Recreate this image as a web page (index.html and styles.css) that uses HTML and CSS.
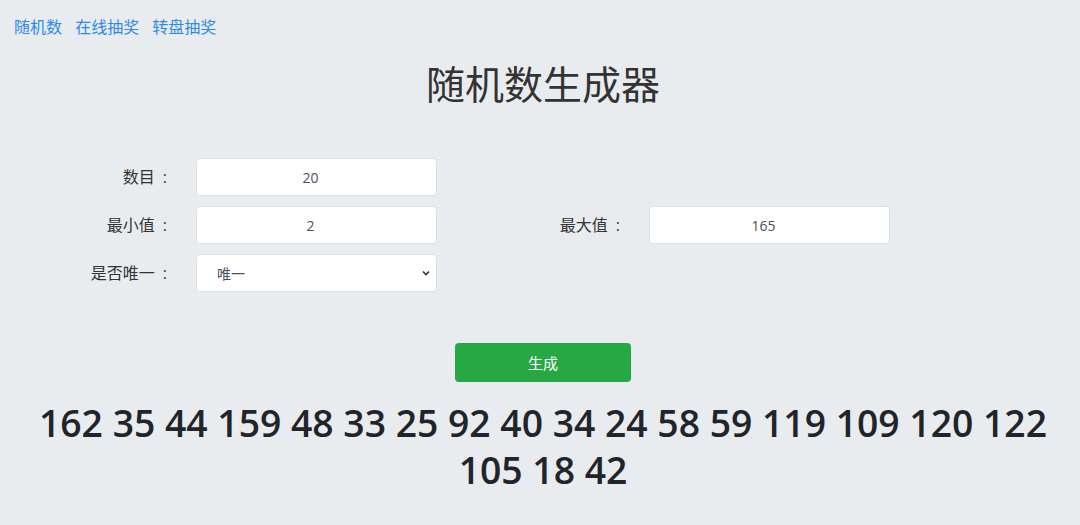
FILE: index.html
```
<!DOCTYPE html>
<html lang="zh-CN">
<head>
  <meta charset="UTF-8">
  <meta name="viewport" content="width=device-width, initial-scale=1.0">
  <title>随机数生成器</title>
  <link rel="stylesheet" href="styles.css">
</head>
<body>
  <nav class="nav">
    <a href="#">随机数</a>
    <a href="#">在线抽奖</a>
    <a href="#">转盘抽奖</a>
  </nav>

  <h1 class="title">随机数生成器</h1>

  <form class="form">
    <label class="label" for="count">数目<span class="colon">:</span></label>
    <input id="count" class="field" type="text" value="20">
    <span></span><span></span>

    <label class="label" for="min">最小值<span class="colon">:</span></label>
    <input id="min" class="field" type="text" value="2">
    <label class="label" for="max">最大值<span class="colon">:</span></label>
    <input id="max" class="field" type="text" value="165">

    <label class="label" for="unique">是否唯一<span class="colon">:</span></label>
    <div class="select-wrap">
      <select id="unique" class="field select">
        <option>唯一</option>
        <option>不唯一</option>
      </select>
      <svg class="chevron" width="10" height="10" viewBox="0 0 10 10">
        <path d="M2 3.5 L5 6.5 L8 3.5" fill="none" stroke="#333" stroke-width="1.6"/>
      </svg>
    </div>
  </form>

  <div class="actions">
    <button class="btn" type="button">生成</button>
  </div>

  <div class="result">162 35 44 159 48 33 25 92 40 34 24 58 59 119 109 120 122 105 18 42</div>
</body>
</html>
```

FILE: styles.css
```
body {
  margin: 0;
  padding: 0 5px 0 11px;
  background-color: #e9ecef;
  font-family: "Open Sans", "Noto Sans CJK SC", sans-serif;
  color: #333;
}
.nav {
  padding-top: 16px;
  padding-left: 3px;
  font-size: 16px;
  line-height: 22px;
}
.nav a {
  color: #2e8ae6;
  text-decoration: none;
  margin-right: 9px;
}
.title {
  margin: 21px 0 0;
  text-align: center;
  font-size: 39px;
  font-weight: 400;
  line-height: 50px;
  color: #333;
}
.form {
  display: grid;
  grid-template-columns: 165px 241px 172px 241px;
  column-gap: 20px;
  row-gap: 10px;
  margin-top: 49px;
}
.label {
  text-align: right;
  font-size: 16px;
  line-height: 38px;
  color: #333;
}
.colon {
  margin-left: 8px;
  padding-right: 9px;
}
.field {
  box-sizing: border-box;
  height: 38px;
  width: 241px;
  margin: 0;
  padding: 0 14px 0 2px;
  background: #fff;
  border: 1px solid #dde1e5;
  border-radius: 4px;
  font-family: "Open Sans", "Noto Sans CJK SC", sans-serif;
  font-size: 14px;
  color: #495057;
  text-align: center;
  outline: none;
}
.select-wrap {
  position: relative;
  width: 241px;
}
.select {
  appearance: none;
  -webkit-appearance: none;
  text-align: left;
  padding-left: 20px;
}
.chevron {
  position: absolute;
  right: 6px;
  top: 14px;
}
.actions {
  display: flex;
  justify-content: center;
  margin-top: 51px;
}
.btn {
  width: 176px;
  height: 39px;
  border: none;
  border-radius: 4px;
  background-color: #28a745;
  color: #fff;
  font-family: "Open Sans", "Noto Sans CJK SC", sans-serif;
  font-size: 15px;
}
.result {
  margin-top: 17px;
  text-align: center;
  font-size: 37.3px;
  font-weight: 600;
  line-height: 47px;
  color: #212529;
}
```
